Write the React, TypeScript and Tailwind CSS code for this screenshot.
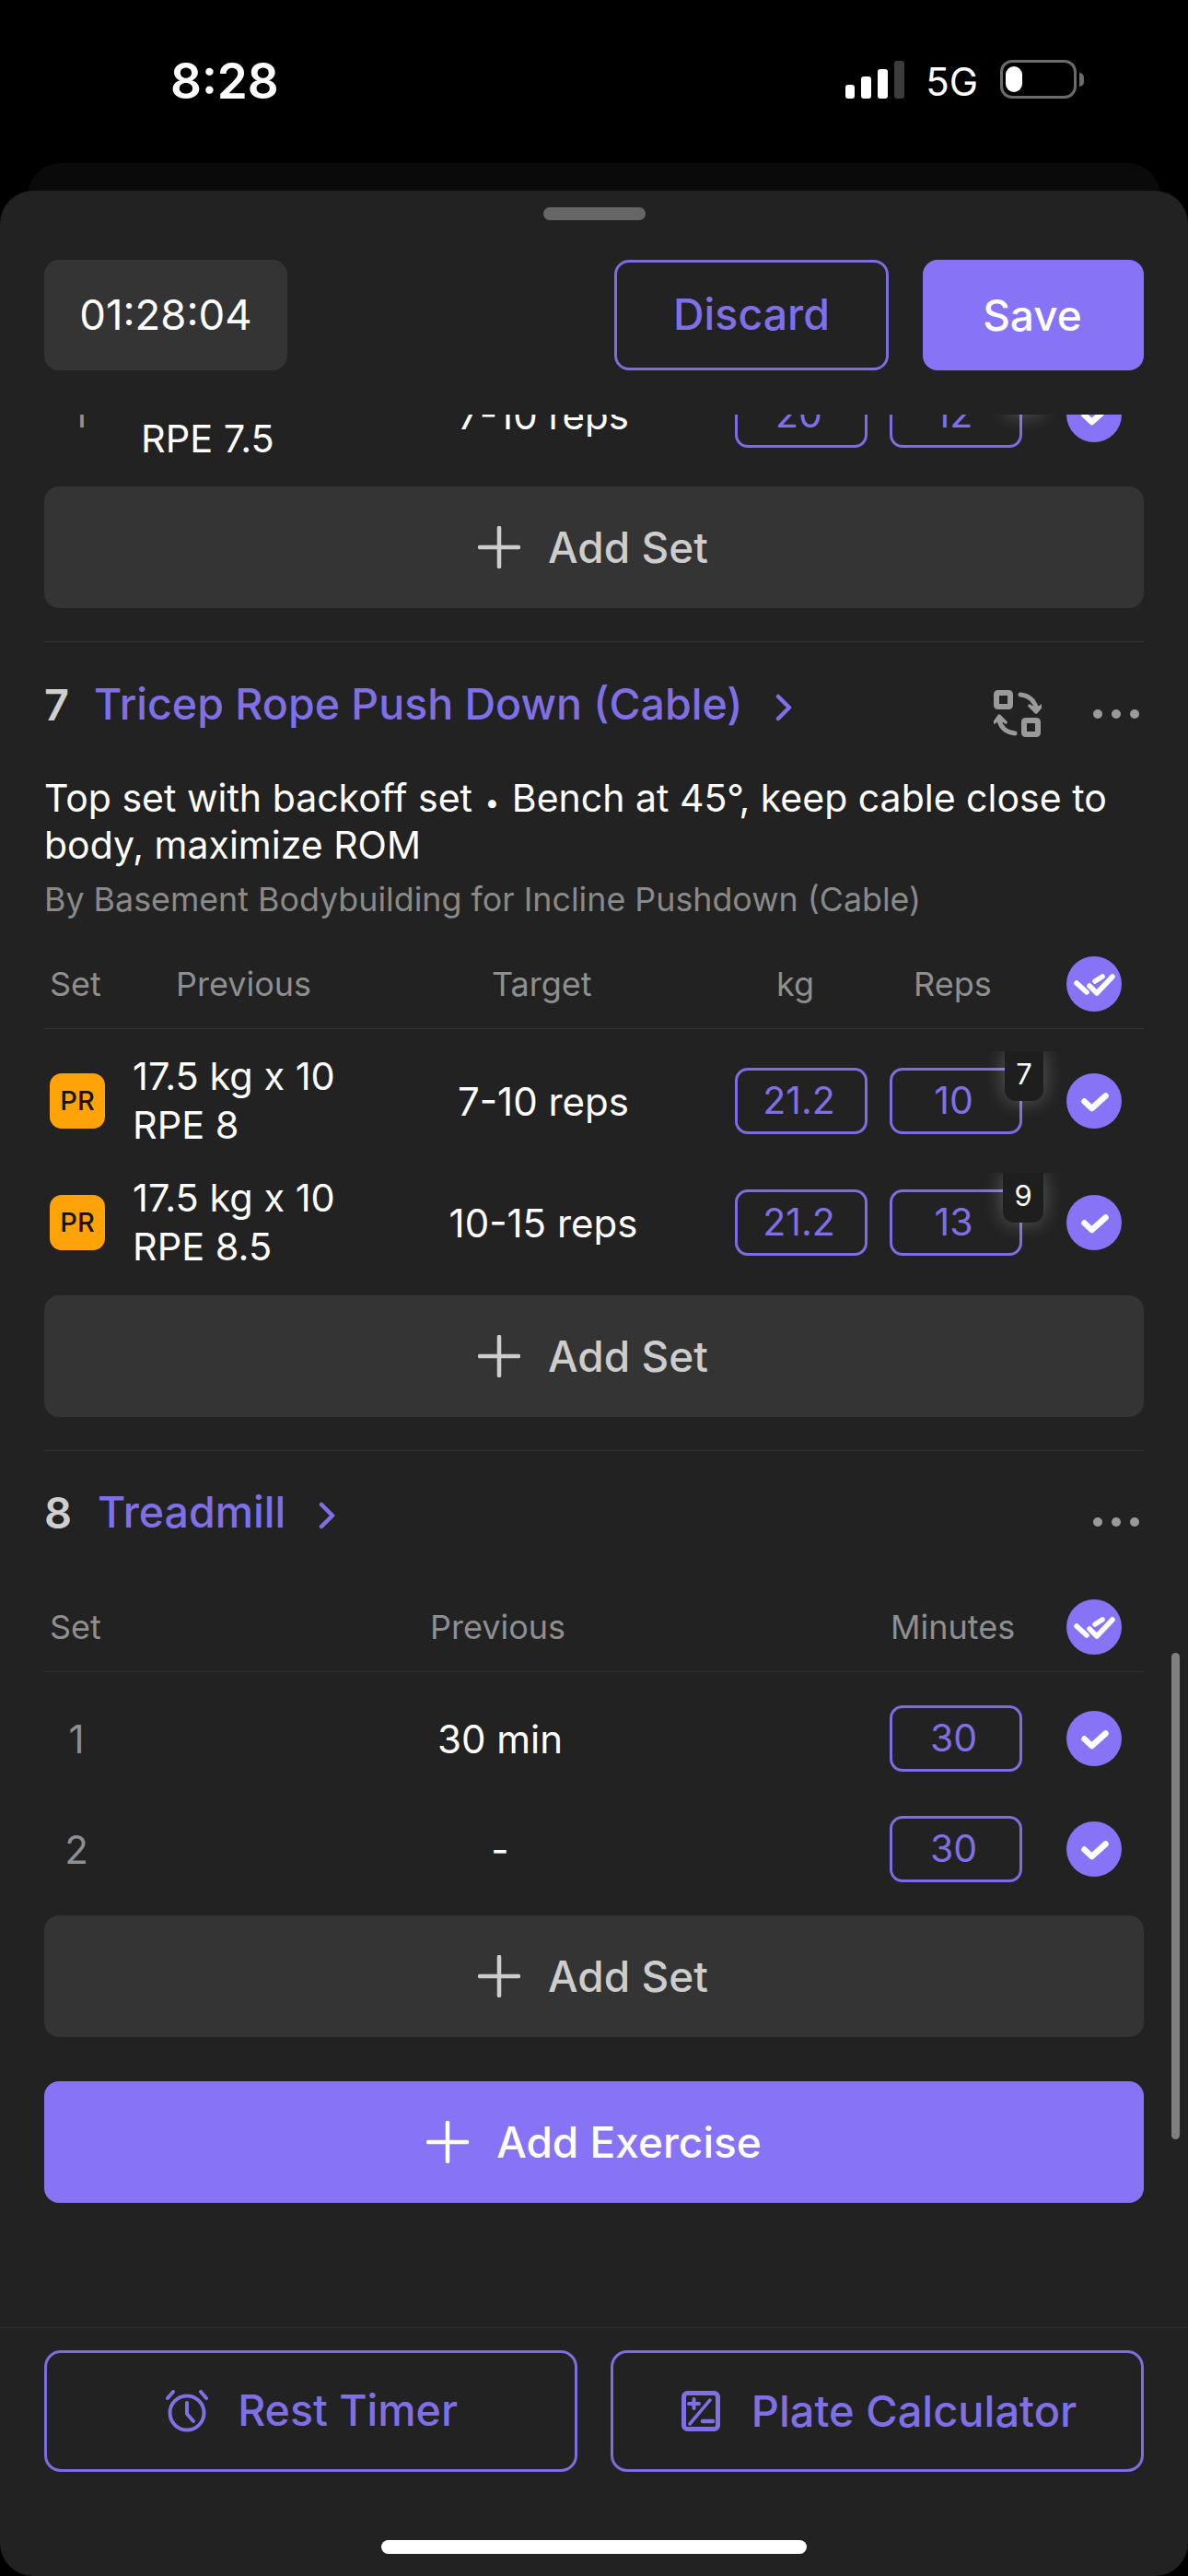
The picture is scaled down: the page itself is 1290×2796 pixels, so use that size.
import React from "react";

const Plus = ({ c }: { c: string }) => (
  <svg width="46" height="46" viewBox="0 0 46 46" fill="none" stroke={c} strokeWidth="4.5" strokeLinecap="round">
    <path d="M23 2v42M2 23h42" />
  </svg>
);

const Check = () => (
  <svg width="60" height="60" viewBox="0 0 60 60" fill="none" stroke="#fff" strokeWidth="6.5" strokeLinecap="round" strokeLinejoin="round">
    <path d="M19.5 30.5L27.5 38L42.5 24.5" />
  </svg>
);

const DoubleCheck = () => (
  <svg width="60" height="60" viewBox="0 0 60 60" fill="none" stroke="#fff" strokeWidth="5.5" strokeLinecap="round" strokeLinejoin="round">
    <path d="M11 29l11 10" />
    <path d="M25 32l8 8 17-18" />
    <path d="M31 27l8-5" />
  </svg>
);

const Circle = ({ all }: { all?: boolean }) => (
  <div className="h-[60px] w-[60px] shrink-0 rounded-full bg-[#8673f5]">{all ? <DoubleCheck /> : <Check />}</div>
);

const Chevron = () => (
  <svg width="20" height="30" viewBox="0 0 20 30" fill="none" stroke="#7f70e6" strokeWidth="4.5" strokeLinecap="round" strokeLinejoin="round">
    <path d="M4 3l12 12L4 27" />
  </svg>
);

const Dots = () => (
  <div className="flex gap-[10px]">
    <div className="h-[10px] w-[10px] rounded-full bg-[#9a9a9a]" />
    <div className="h-[10px] w-[10px] rounded-full bg-[#9a9a9a]" />
    <div className="h-[10px] w-[10px] rounded-full bg-[#9a9a9a]" />
  </div>
);

const SwapIcon = () => (
  <svg width="52" height="52" viewBox="0 0 52 52" fill="none" stroke="#9a9a9a" strokeLinecap="round" strokeLinejoin="round">
    <rect x="3" y="3" width="15" height="15" rx="1.5" strokeWidth="6" />
    <rect x="33" y="33" width="15" height="15" rx="1.5" strokeWidth="6" />
    <path d="M29 5c9 1 15 6 17 14" strokeWidth="5" />
    <path d="M39 17l7 7 6-7" strokeWidth="3.5" fill="#9a9a9a" />
    <path d="M23 47c-9-1-15-6-17-14" strokeWidth="5" />
    <path d="M1 35l5-7 7 7" strokeWidth="3.5" fill="#9a9a9a" />
  </svg>
);

const AlarmIcon = () => (
  <svg width="46" height="46" viewBox="0 0 46 46" fill="none" stroke="#7f70e6" strokeWidth="4" strokeLinecap="round" strokeLinejoin="round">
    <circle cx="23" cy="25" r="18.5" />
    <path d="M23 14v12l7 8" />
    <path d="M2 9l6-7M44 9l-6-7" />
  </svg>
);

const PlateIcon = () => (
  <svg width="42" height="44" viewBox="0 0 42 44" fill="none" stroke="#7f70e6" strokeLinecap="round" strokeLinejoin="round">
    <rect x="2.5" y="2.5" width="37" height="39" rx="4" strokeWidth="5" />
    <path d="M9 36l22-26" strokeWidth="3.5" />
    <path d="M8 14h11M13.5 9v10" strokeWidth="4" />
    <path d="M23 33h11" strokeWidth="4.5" />
  </svg>
);

const Num = ({ v, badge, w = "w-[42px]" }: { v: string; badge?: string; w?: string }) => (
  <div className="relative flex h-[72px] w-[144px] shrink-0 items-center justify-center rounded-[14px] border-[3px] border-[#7c6ee0] pr-[5px] text-[41px] text-[#7f70e6]">
    {v}
    {badge && (
      <div className="absolute right-[-46px] top-[-21px] h-[90px] w-[86px] overflow-hidden">
        <div className={`ml-auto mr-[20px] flex h-[54px] ${w} justify-center rounded-b-[12px] bg-[#1e1e1e] pt-[3px] text-[31px] leading-[44px] text-white shadow-[0_0_22px_rgba(255,255,255,0.28)]`}>
          {badge}
        </div>
      </div>
    )}
  </div>
);

const PR = () => (
  <div className="ml-[6px] flex h-[60px] w-[60px] items-center justify-center rounded-[13px] bg-[#ffa309] text-[29px] font-medium text-[#1a1200]">PR</div>
);

const SetRow = ({
  left, l1, l2, target, kg, reps, badge, badgeW, indent,
}: { left: React.ReactNode; l1: string; l2: string; target: string; kg: string; reps: string; badge: string; badgeW?: string; indent?: boolean }) => (
  <div className="flex h-[132px] items-center">
    <div className="w-[96px] shrink-0">{left}</div>
    <div className={`w-[336px] shrink-0 text-[41.5px] leading-[53px] text-white ${indent ? "pl-[9px]" : ""}`}>
      <div>{l1}</div>
      <div>{l2}</div>
    </div>
    <div className="w-[220px] shrink-0 text-center text-[42px] text-white">{target}</div>
    <div className="ml-[98px]"><Num v={kg} /></div>
    <div className="ml-[24px]"><Num v={reps} badge={badge} w={badgeW} /></div>
    <div className="ml-[48px]"><Circle /></div>
  </div>
);

const AddSet = () => (
  <div className="flex h-[132px] items-center justify-center gap-[30px] rounded-[16px] bg-[#343434] pr-[2px] text-[46px] font-medium text-[#cdcdcd]">
    <Plus c="#cdcdcd" />
    <span>Add Set</span>
  </div>
);

const Divider = () => <div className="h-px bg-[#333333]" />;

const Title = ({ n, name, swap, w }: { n: string; name: string; swap?: boolean; w: string }) => (
  <div className="flex h-[60px] items-center">
    <span className={`${w} text-[47px] font-semibold text-[#cfcfcf]`}>{n}</span>
    <span className="text-[46.5px] font-medium text-[#7f70e6]">{name}</span>
    <span className="ml-[35px] mt-[6px] flex"><Chevron /></span>
    <div className="ml-auto flex items-center">
      {swap && <span className="mr-[56px] mt-[20px] flex"><SwapIcon /></span>}
      <span className="mr-[5px] mt-[20px]"><Dots /></span>
    </div>
  </div>
);

const Sheet = () => (
  <div className="relative flex h-[2589px] flex-col overflow-hidden rounded-[36px] bg-[#222222]">
    <div className="mx-auto mt-[18px] h-[14px] w-[111px] rounded-full bg-[#666666]" />
    <div className="mt-[43px] flex h-[120px] items-center px-[48px]">
      <div className="flex h-[120px] w-[264px] items-center justify-center rounded-[16px] bg-[#343434] text-[45.5px] text-white">01:28:04</div>
      <div className="ml-auto flex h-[120px] w-[298px] items-center justify-center rounded-[16px] border-[3px] border-[#7c6ee0] text-[46.5px] font-medium text-[#7f70e6]">Discard</div>
      <div className="ml-[37px] flex h-[120px] w-[240px] items-center justify-center rounded-[16px] bg-[#8673f5] pr-[2px] text-[46px] font-medium text-white">Save</div>
    </div>

    <div className="mt-[48px] h-[2076px] overflow-hidden px-[48px]">
      <div className="-mt-[66px]">
        <SetRow indent left={<span className="block pl-[30px] text-[40px] text-[#8f8f8f]">1</span>} l1="20 kg x 12" l2="RPE 7.5" target="7-10 reps" kg="20" reps="12" badge="8" />
      </div>
      <div className="mt-[12px]"><AddSet /></div>

      <div className="mt-[36px]"><Divider /></div>
      <div className="mt-[38px]"><Title n="7" w="w-[54px]" name="Tricep Rope Push Down (Cable)" swap /></div>
      <div className="mt-[46px] text-[41px] leading-[51px] text-white">
        Top set with backoff set <span className="mx-[2px] text-[28px] leading-none">•</span> Bench at 45°, keep cable close to body, maximize ROM
      </div>
      <div className="mt-[9px] text-[35.8px] leading-[48px] text-[#8a8a8a]">By Basement Bodybuilding for Incline Pushdown (Cable)</div>
      <div className="mt-[38px] flex h-[60px] items-center text-[36px] text-[#8f8f8f]">
        <span className="w-[143px] pl-[6px]">Set</span>
        <span className="w-[343px]">Previous</span>
        <span className="w-[309px]">Target</span>
        <span className="w-[149px]">kg</span>
        <span className="w-[166px]">Reps</span>
        <Circle all />
      </div>
      <div className="mt-[18px]"><Divider /></div>
      <div className="mt-[12px]">
        <SetRow left={<PR />} l1="17.5 kg x 10" l2="RPE 8" target="7-10 reps" kg="21.2" reps="10" badge="7" />
        <SetRow left={<PR />} l1="17.5 kg x 10" l2="RPE 8.5" target="10-15 reps" kg="21.2" reps="13" badge="9" badgeW="w-[44px]" />
      </div>
      <div className="mt-[13px]"><AddSet /></div>

      <div className="mt-[36px]"><Divider /></div>
      <div className="mt-[37px]"><Title n="8" w="w-[58px]" name="Treadmill" /></div>
      <div className="mt-[64px] flex h-[60px] items-center text-[36px] text-[#8f8f8f]">
        <span className="w-[419px] pl-[6px]">Set</span>
        <span className="w-[500px]">Previous</span>
        <span className="w-[191px]">Minutes</span>
        <Circle all />
      </div>
      <div className="mt-[18px]"><Divider /></div>
      <div className="mt-[12px]">
        {[["1", "30 min"], ["2", "-"]].map(([n, p]) => (
          <div key={n} className="flex h-[120px] items-center text-[42px]">
            <span className="w-[70px] text-center text-[#8f8f8f]">{n}</span>
            <span className="w-[848px] pl-[2px] text-center text-white">{p}</span>
            <Num v="30" />
            <div className="ml-[48px]"><Circle /></div>
          </div>
        ))}
      </div>
      <div className="mt-[12px]"><AddSet /></div>

      <div className="mt-[48px] flex h-[132px] items-center justify-center gap-[30px] rounded-[16px] bg-[#8673f5] text-[46px] font-medium text-white">
        <Plus c="#ffffff" />
        <span>Add Exercise</span>
      </div>
    </div>

    <div className="border-t border-[#333333] px-[48px] pt-[24px]">
      <div className="flex justify-between">
        <div className="flex h-[132px] w-[579px] items-center justify-center gap-[32px] rounded-[18px] border-[3px] border-[#7c6ee0] pl-[2px] text-[46.5px] font-medium text-[#7f70e6]">
          <AlarmIcon />
          <span>Rest Timer</span>
        </div>
        <div className="flex h-[132px] w-[579px] items-center justify-center gap-[34px] rounded-[18px] border-[3px] border-[#7c6ee0] pl-[4px] text-[47px] font-medium text-[#7f70e6]">
          <PlateIcon />
          <span>Plate Calculator</span>
        </div>
      </div>
    </div>
    <div className="mx-auto mt-[74px] h-[15px] w-[462px] rounded-full bg-white" />

    <div className="absolute left-[1272px] top-[1587px] h-[528px] w-[9px] rounded-full bg-[#808080]" />
  </div>
);

const StatusBar = () => (
  <div className="flex h-[177px] items-start text-white">
    <div className="ml-[185px] mt-[56px] text-[53px] font-semibold leading-[64px]">8:28</div>
    <div className="ml-auto mr-[113px] mt-[65px] flex items-end">
      <div className="flex items-end gap-[7px]">
        <div className="h-[15px] w-[10px] rounded-[3px] bg-white" />
        <div className="h-[24px] w-[11px] rounded-[3px] bg-white" />
        <div className="h-[32px] w-[11px] rounded-[3px] bg-white" />
        <div className="h-[41px] w-[11px] rounded-[3px] bg-[#3c3c3c]" />
      </div>
      <div className="ml-[23px] h-[42px] pt-[3px] text-[42px] leading-[42px]">5G</div>
      <div className="ml-[24px] flex items-center">
        <div className="h-[42px] w-[83px] rounded-[13px] border-[3px] border-[#6b6b6b] py-[4px] pl-[3px]">
          <div className="h-[28px] w-[18px] rounded-[9px] bg-white" />
        </div>
        <div className="ml-[3px] h-[15px] w-[5px] rounded-r-full bg-[#6b6b6b]" />
      </div>
    </div>
  </div>
);

export default function App() {
  return (
    <div className="h-[2796px] w-[1290px] overflow-hidden bg-black font-['Inter',sans-serif]">
      <StatusBar />
      <div className="mx-[30px] h-[66px] rounded-t-[36px] bg-[#0a0a0a]" />
      <div className="-mt-[36px]"><Sheet /></div>
    </div>
  );
}
